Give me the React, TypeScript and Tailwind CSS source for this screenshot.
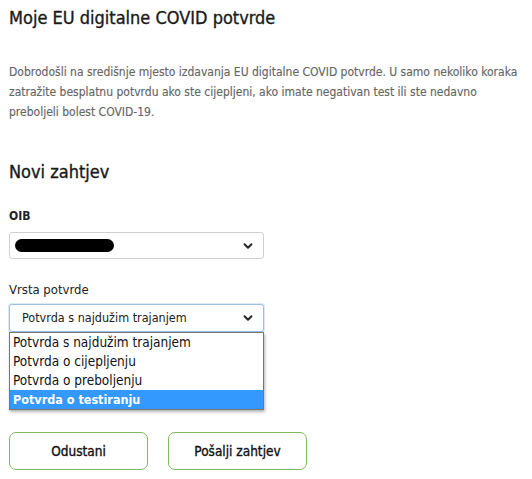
import { ChevronDown } from 'lucide-react';

const options = [
  'Potvrda s najdužim trajanjem',
  'Potvrda o cijepljenju',
  'Potvrda o preboljenju',
  'Potvrda o testiranju',
];

function Chevron() {
  return <ChevronDown className="h-[14px] w-[14px] text-[#222]" strokeWidth={3.2} />;
}

export default function App() {
  return (
    <div
      className="min-h-screen bg-white px-[9px] text-[#222]"
      style={{ fontFamily: '"DejaVu Sans Condensed", "Liberation Sans", sans-serif' }}
    >
      <h1 className="pt-[7px] text-[18px] font-medium leading-[22px] text-[#1a1a1a] [-webkit-text-stroke:0.35px_#1a1a1a]">
        Moje EU digitalne COVID potvrde
      </h1>

      <p className="mt-[33px] text-[12px] leading-[20px] text-[#666] [-webkit-text-stroke:0.15px_#666]">
        Dobrodošli na središnje mjesto izdavanja EU digitalne COVID potvrde. U samo nekoliko koraka
        zatražite besplatnu potvrdu ako ste cijepljeni, ako imate negativan test ili ste nedavno
        preboljeli bolest COVID-19.
      </p>

      <h2 className="mt-[39px] text-[18px] font-medium leading-[22px] text-[#1a1a1a] [-webkit-text-stroke:0.35px_#1a1a1a]">
        Novi zahtjev
      </h2>

      <div className="mt-[25px] text-[12px] font-bold leading-[16px]">OIB</div>
      <div className="mt-[8px] flex h-[27px] w-[255px] items-center justify-between rounded-[3px] border border-[#d0d0d0] bg-white pl-[5px] pr-[8px]">
        <div className="h-[13px] w-[99px] rounded-full bg-black" />
        <Chevron />
      </div>

      <div className="mt-[23px] text-[13px] leading-[16px]">Vrsta potvrde</div>
      <div className="relative mt-[6px] w-[255px]">
        <div className="flex h-[28px] items-center justify-between rounded-[3px] border border-[#9cbfe6] bg-white pl-[12px] pr-[8px] text-[12.5px] shadow-[0_0_0_1px_#dbe8f7]">
          <span>Potvrda s najdužim trajanjem</span>
          <Chevron />
        </div>
        <ul className="absolute left-0 top-[28px] z-10 w-[255px] border border-[#767676] bg-white text-[13.5px] shadow-[1px_2px_3px_rgba(0,0,0,0.3)]">
          {options.map((o, i) => (
            <li
              key={o}
              className={
                i === 3
                  ? 'h-[19px] bg-[#3399ff] pl-[3px] text-[12.5px] leading-[19px] font-bold text-white'
                  : 'h-[19px] pl-[3px] leading-[19px] text-[#111]'
              }
            >
              {o}
            </li>
          ))}
        </ul>
      </div>

      <div className="mt-[100px] flex gap-[20px]">
        <button className="h-[38px] w-[139px] rounded-[7px] border border-[#7dbb5c] bg-white text-[13.5px] text-[#111] [-webkit-text-stroke:0.35px_#111]">
          Odustani
        </button>
        <button className="h-[38px] w-[139px] rounded-[7px] border border-[#7dbb5c] bg-white text-[13.5px] text-[#111] [-webkit-text-stroke:0.35px_#111]">
          Pošalji zahtjev
        </button>
      </div>
    </div>
  );
}
